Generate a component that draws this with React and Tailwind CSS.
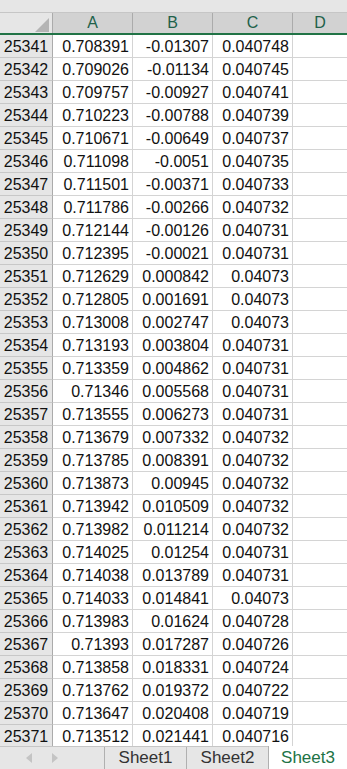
import React from 'react';

const rows = [
    [25341, '0.708391', '-0.01307', '0.040748'],
    [25342, '0.709026', '-0.01134', '0.040745'],
    [25343, '0.709757', '-0.00927', '0.040741'],
    [25344, '0.710223', '-0.00788', '0.040739'],
    [25345, '0.710671', '-0.00649', '0.040737'],
    [25346, '0.711098', '-0.0051', '0.040735'],
    [25347, '0.711501', '-0.00371', '0.040733'],
    [25348, '0.711786', '-0.00266', '0.040732'],
    [25349, '0.712144', '-0.00126', '0.040731'],
    [25350, '0.712395', '-0.00021', '0.040731'],
    [25351, '0.712629', '0.000842', '0.04073'],
    [25352, '0.712805', '0.001691', '0.04073'],
    [25353, '0.713008', '0.002747', '0.04073'],
    [25354, '0.713193', '0.003804', '0.040731'],
    [25355, '0.713359', '0.004862', '0.040731'],
    [25356, '0.71346', '0.005568', '0.040731'],
    [25357, '0.713555', '0.006273', '0.040731'],
    [25358, '0.713679', '0.007332', '0.040732'],
    [25359, '0.713785', '0.008391', '0.040732'],
    [25360, '0.713873', '0.00945', '0.040732'],
    [25361, '0.713942', '0.010509', '0.040732'],
    [25362, '0.713982', '0.011214', '0.040732'],
    [25363, '0.714025', '0.01254', '0.040731'],
    [25364, '0.714038', '0.013789', '0.040731'],
    [25365, '0.714033', '0.014841', '0.04073'],
    [25366, '0.713983', '0.01624', '0.040728'],
    [25367, '0.71393', '0.017287', '0.040726'],
    [25368, '0.713858', '0.018331', '0.040724'],
    [25369, '0.713762', '0.019372', '0.040722'],
    [25370, '0.713647', '0.020408', '0.040719'],
    [25371, '0.713512', '0.021441', '0.040716'],
];

const font = { fontFamily: '"Liberation Sans", Arial, sans-serif' };

const Cell = ({ children }) => (
    <div className="flex h-full w-[80px] shrink-0 items-end justify-end border-r border-b border-[#d4d4d4] bg-white pr-[3px] text-[16px] leading-[21px] text-[#111]">
        {children}
    </div>
);

const App = () => (
    <div className="flex h-[769px] w-[347px] flex-col overflow-hidden bg-white" style={font}>
        <div className="h-[13px] shrink-0 border-b border-[#c6c6c6] bg-[#e6e6e6]" />

        <div className="flex h-[22px] shrink-0 border-b-2 border-[#217346]">
            <div className="relative w-[53px] shrink-0 border-r border-[#ababab] bg-[#e6e6e6]">
                <svg className="absolute top-[5px] left-[35px]" width="14" height="14" viewBox="0 0 14 14">
                    <polygon points="14,0 14,14 0,14" fill="#b4b4b4" />
                </svg>
            </div>
            {['A', 'B', 'C'].map((c) => (
                <div key={c} className="flex w-[80px] shrink-0 items-end justify-center border-r border-[#ababab] bg-[#d2d2d2] text-[16px] leading-[20px] text-[#21614a]">
                    {c}
                </div>
            ))}
            <div className="flex flex-1 items-end justify-center bg-[#d2d2d2] text-[16px] leading-[20px] text-[#21614a]">D</div>
        </div>

        <div className="flex-1 overflow-hidden">
            {rows.map(([n, a, b, c]) => (
                <div key={n} className="flex h-[23px]">
                    <div className="flex w-[53px] shrink-0 items-end justify-center border-r border-b border-r-[#ababab] border-b-[#c8c8c8] bg-[#e6e6e6] text-[16px] leading-[21px] text-[#111]">
                        {n}
                    </div>
                    <Cell>{a}</Cell>
                    <Cell>{b}</Cell>
                    <Cell>{c}</Cell>
                    <div className="h-full flex-1 border-b border-[#d4d4d4]" />
                </div>
            ))}
        </div>

        <div className="flex h-[23px] shrink-0 border-t border-[#c6c6c6] bg-[#e6e6e6]">
            <div className="flex w-[104px] shrink-0 items-center gap-[20px] pl-[26px]">
                <span className="h-0 w-0 border-y-[5px] border-r-[6px] border-y-transparent border-r-[#c4c4c4]" />
                <span className="h-0 w-0 border-y-[5px] border-l-[6px] border-y-transparent border-l-[#c4c4c4]" />
            </div>
            <div className="flex w-[82px] shrink-0 items-center justify-center border-l border-[#b0b0b0] text-[17px] text-[#333]">Sheet1</div>
            <div className="flex w-[82px] shrink-0 items-center justify-center border-l border-[#b0b0b0] text-[17px] text-[#333]">Sheet2</div>
            <div className="-mt-px flex flex-1 items-center justify-center border-l border-[#b0b0b0] bg-white text-[17px] text-[#217346]">Sheet3</div>
        </div>
    </div>
);

export default App;
